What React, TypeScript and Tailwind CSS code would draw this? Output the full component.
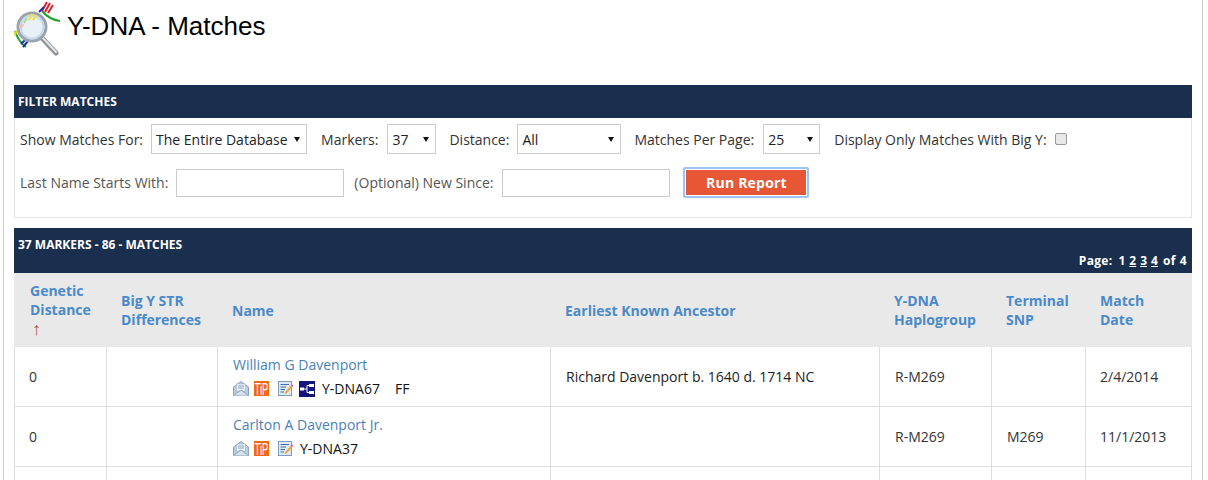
const font = "font-['Open_Sans',sans-serif]";

const rows = [
  {
    distance: "0",
    name: "William G Davenport",
    test: "Y-DNA67",
    tree: true,
    extra: "FF",
    ancestor: "Richard Davenport b. 1640 d. 1714 NC",
    haplogroup: "R-M269",
    snp: "",
    date: "2/4/2014",
  },
  {
    distance: "0",
    name: "Carlton A Davenport Jr.",
    test: "Y-DNA37",
    tree: false,
    extra: "",
    ancestor: "",
    haplogroup: "R-M269",
    snp: "M269",
    date: "11/1/2013",
  },
];

function Logo() {
  return (
    <svg width="52" height="56" viewBox="0 0 52 56" className="shrink-0">
      <path d="M28 11 C33 17 39 20 46 21" fill="none" stroke="#1aa52a" strokeWidth="2" />
      <path d="M1 31 C3 37 6 43 12 47" fill="none" stroke="#1aa52a" strokeWidth="2" />
      <path d="M28 11 L33 2 M31 12 L36 3 M34 13 L39 5" stroke="#e0202a" strokeWidth="2" />
      <path d="M25 12 L30 7" stroke="#1c2fb0" strokeWidth="2" />
      <path d="M7 44 L13 38 M9 47 L14 41" stroke="#1c2fb0" strokeWidth="2" />
      <path d="M0 35 L3 31" stroke="#e8d820" strokeWidth="2.5" />
      <path d="M28 38 L42 53" stroke="#8d9296" strokeWidth="5" strokeLinecap="round" />
      <path d="M28 37 L42 52" stroke="#e4e6e8" strokeWidth="2" strokeLinecap="round" />
      <circle cx="18" cy="27" r="14" fill="#e8f0f8" stroke="#9aa4ac" strokeWidth="3" />
      <circle cx="18" cy="27" r="11.5" fill="none" stroke="#c8d8ec" strokeWidth="2" />
      <path d="M15 20 L18 14 M19 20 L22 15" stroke="#ecdf5a" strokeWidth="2.5" />
      <path d="M10 23 L13 18" stroke="#a8d8a0" strokeWidth="2" />
      <path d="M6 28 L9 24" stroke="#f0c0c0" strokeWidth="3" />
    </svg>
  );
}

function SelectBox({ value, width }: { value: string; width: string }) {
  return (
    <div className={`relative h-[30px] ${width}`}>
      <select
        defaultValue={value}
        className={`appearance-none w-full h-full border border-[#ccc] bg-white pl-[4px] text-[14px] text-[#222] outline-none ${font}`}
      >
        <option>{value}</option>
      </select>
      <svg width="6" height="5" viewBox="0 0 6 5" className="absolute right-[7px] top-[13px]">
        <path d="M0 0 H6 L3 5 Z" fill="#111" />
      </svg>
    </div>
  );
}

function MailIcon() {
  return (
    <svg width="16" height="15" viewBox="0 0 16 15">
      <path d="M0.5 6 L8 0.5 L15.5 6 V14.5 H0.5 Z" fill="#b9cde0" stroke="#8ba5bd" />
      <rect x="3.5" y="3" width="9" height="7" fill="#f2f6fa" stroke="#9db3c8" strokeWidth="0.6" />
      <path d="M5 5 H11 M5 7 H11" stroke="#6f8fb0" strokeWidth="0.8" />
      <path d="M0.5 14.5 L8 9 L15.5 14.5" fill="#d6e3ef" stroke="#8ba5bd" />
    </svg>
  );
}

function TipIcon() {
  return (
    <svg width="15" height="15" viewBox="0 0 15 15" className="overflow-visible">
      <rect width="15" height="15" fill="#f26a10" />
      <text
        x="0.5"
        y="13.5"
        fontSize="16"
        fill="#fff"
        fontFamily="Liberation Sans, sans-serif"
        textLength="14"
        lengthAdjust="spacingAndGlyphs"
      >
        TiP
      </text>
    </svg>
  );
}

function NoteIcon() {
  return (
    <svg width="15" height="15" viewBox="0 0 15 15">
      <rect x="0.5" y="0.5" width="13" height="14" fill="#dfe9f5" stroke="#7f9cbd" />
      <path d="M2.5 3.5 H11 M2.5 6 H8 M2.5 8.5 H7 M2.5 11 H6" stroke="#3f6ea8" strokeWidth="1" />
      <path d="M6.5 12 L13 4.5 L14.5 6 L8 13 Z" fill="#f0a030" />
      <path d="M13 4.5 L14.5 6 L15 3.5 Z" fill="#d030a0" />
    </svg>
  );
}

function TreeIcon() {
  return (
    <svg width="16" height="16" viewBox="0 0 16 16">
      <rect width="16" height="16" fill="#14147a" />
      <path d="M4 8 H8 M8 4.5 V11.5 M8 4.5 H12 M8 11.5 H12" stroke="#fff" strokeWidth="1" fill="none" />
      <rect x="1" y="6.5" width="4" height="3" fill="#fff" />
      <rect x="10" y="3" width="5" height="3" fill="#fff" />
      <rect x="10" y="10" width="5" height="3" fill="#fff" />
    </svg>
  );
}

export default function App() {
  return (
    <div className={`h-[480px] overflow-hidden bg-white pl-[3px] pr-[5px] ${font}`}>
      <div className="h-full border-x border-[#ccc] px-[10px]">
        <div className="flex h-[85px] items-start">
          <Logo />
          <h1 className="ml-px mt-[11px] text-[26px] leading-[30px] text-black font-['Liberation_Sans',sans-serif]">
            Y-DNA - Matches
          </h1>
        </div>

        <div className="flex h-[33px] items-center bg-[#1a2f4d] px-[4px] text-[12px] font-bold text-white">
          FILTER MATCHES
        </div>
        <div className="h-[100px] border border-t-0 border-[#e5e5e5] pl-[5px] pt-[6px] text-[14px] text-[#333]">
          <div className="flex h-[30px] items-center">
            <span>Show Matches For:</span>
            <div className="ml-[8px]"><SelectBox value="The Entire Database" width="w-[156px]" /></div>
            <span className="ml-[14px]">Markers:</span>
            <div className="ml-[9px]"><SelectBox value="37" width="w-[49px]" /></div>
            <span className="ml-[13px]">Distance:</span>
            <div className="ml-[8px]"><SelectBox value="All" width="w-[104px]" /></div>
            <span className="ml-[13px]">Matches Per Page:</span>
            <div className="ml-[9px]"><SelectBox value="25" width="w-[57px]" /></div>
            <span className="ml-[14px]">Display Only Matches With Big Y:</span>
            <input
              type="checkbox"
              className="ml-[8px] h-[12px] w-[12px] appearance-none rounded-[2px] border border-[#999] bg-[#e8e8e8]"
            />
          </div>
          <div className="mt-[13px] flex items-center">
            <span className="text-[#555]">Last Name Starts With:</span>
            <input className="ml-[8px] h-[28px] w-[168px] border border-[#ccc] bg-white outline-none" />
            <span className="ml-[10px] text-[#555]">(Optional) New Since:</span>
            <input className="ml-[9px] h-[28px] w-[168px] border border-[#ccc] bg-white outline-none" />
            <button className="ml-[13px] h-[31px] w-[126px] rounded-[2px] border-2 border-[#9ec3f5] bg-[#e75735] text-[14px] font-bold tracking-[0.2px] text-white shadow-[inset_0_0_0_1px_#fff]">
              Run Report
            </button>
          </div>
        </div>

        <div className="mt-[10px] flex h-[45px] flex-col justify-between bg-[#1a2f4d] pl-[4px] pr-[5px] pb-[5px] pt-[9px] text-[12px] font-bold text-white">
          <div className="leading-[16px]">37 MARKERS - 86 - MATCHES</div>
          <div className="flex justify-end gap-[4px] leading-[16px]">
            <span className="mr-[2px] tracking-[0.3px]">Page:</span>
            <span>1</span>
            <span className="underline">2</span>
            <span className="underline">3</span>
            <span className="underline">4</span>
            <span className="ml-px tracking-[0.5px]">of 4</span>
          </div>
        </div>

        <table className="w-[1178px] table-fixed border-separate border-spacing-0 text-[14px] text-[#333]">
          <colgroup>
            <col className="w-[93px]" />
            <col className="w-[111px]" />
            <col className="w-[333px]" />
            <col className="w-[329px]" />
            <col className="w-[112px]" />
            <col className="w-[94px]" />
            <col className="w-[106px]" />
          </colgroup>
          <thead>
            <tr className="h-[74px] bg-[#e9e9e9] text-left align-middle text-[14px] font-bold leading-[19px] text-[#4a8aca]">
              <th className="pl-[16px] pr-[4px]">
                Genetic Distance
                <div className="ml-[2px] font-['Liberation_Sans',sans-serif] text-[18px] font-normal leading-[20px] text-[#a8583c]">↑</div>
              </th>
              <th className="pl-[14px]">Big Y STR Differences</th>
              <th className="pl-[14px]">Name</th>
              <th className="pl-[14px]">Earliest Known Ancestor</th>
              <th className="pl-[14px] pr-[10px]">Y-DNA Haplogroup</th>
              <th className="pl-[14px] pr-[10px]">Terminal SNP</th>
              <th className="pl-[14px] pr-[30px]">Match Date</th>
            </tr>
          </thead>
          <tbody>
            {rows.map((row) => (
              <tr key={row.name} className="h-[60px]">
                <td className="border-x border-b border-[#ddd] pl-[14px]">{row.distance}</td>
                <td className="border-r border-b border-[#ddd]"></td>
                <td className="border-r border-b border-[#ddd] pl-[15px]">
                  <div className="leading-[20px] text-[#4a7fb8]">{row.name}</div>
                  <div className="mt-[4px] flex h-[20px] items-center text-[14px] text-[#111]">
                    <MailIcon />
                    <span className="ml-[5px] flex"><TipIcon /></span>
                    <span className="ml-[9px] flex"><NoteIcon /></span>
                    {row.tree && <span className="ml-[6px] flex"><TreeIcon /></span>}
                    <span className="ml-[7px]">{row.test}</span>
                    {row.extra && <span className="ml-[15px]">{row.extra}</span>}
                  </div>
                </td>
                <td className="border-r border-b border-[#ddd] pl-[15px] text-[#222]">{row.ancestor}</td>
                <td className="border-r border-b border-[#ddd] pl-[15px]">{row.haplogroup}</td>
                <td className="border-r border-b border-[#ddd] pl-[15px]">{row.snp}</td>
                <td className="border-r border-b border-[#ddd] pl-[14px]">{row.date}</td>
              </tr>
            ))}
            <tr className="h-[60px]">
              <td className="border-x border-[#ddd]"></td>
              <td className="border-r border-[#ddd]"></td>
              <td className="border-r border-[#ddd]"></td>
              <td className="border-r border-[#ddd]"></td>
              <td className="border-r border-[#ddd]"></td>
              <td className="border-r border-[#ddd]"></td>
              <td className="border-r border-[#ddd]"></td>
            </tr>
          </tbody>
        </table>
      </div>
    </div>
  );
}
